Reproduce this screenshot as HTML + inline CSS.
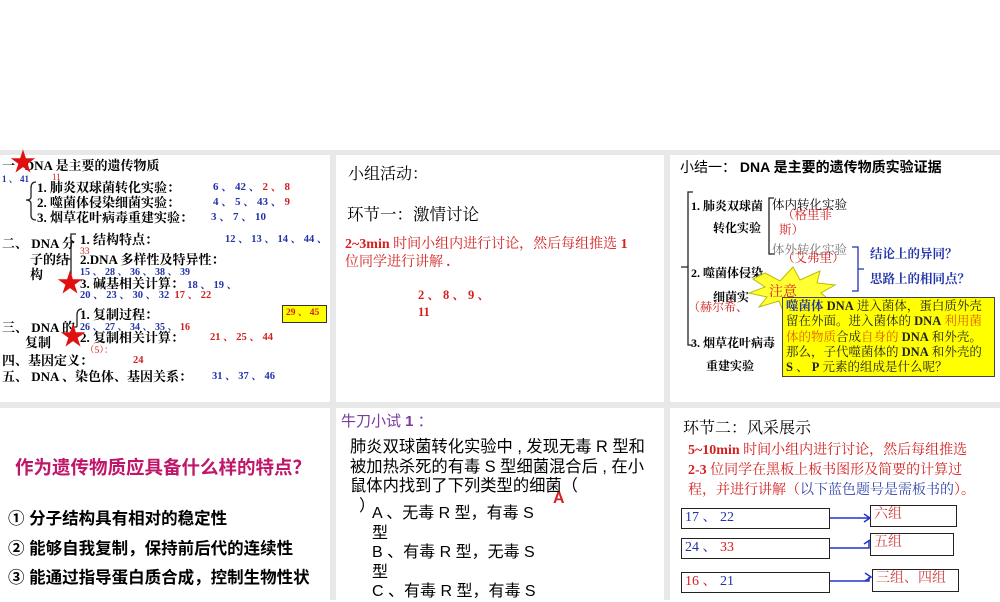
<!DOCTYPE html>
<html><head><meta charset="utf-8"><style>
body{margin:0;width:1000px;height:600px;background:#fff;position:relative;overflow:hidden;font-family:"Liberation Serif","Noto Serif CJK SC",serif;}
.g{position:absolute;background:#e8e8e8}
.p{position:absolute;background:#fff}
.t{position:absolute;white-space:nowrap;line-height:1}
.b{font-weight:bold}
.s{font-family:"Liberation Sans","Noto Sans CJK SC",sans-serif}
.bl{color:#2233aa}.rd{color:#d42020}
.star{position:absolute;color:#e01010;font-size:26px;line-height:1}
.box{position:absolute;border:1.5px solid #222;background:#fff;font-size:14px;line-height:18px;padding-left:3px}
</style></head><body>
<div class="g" style="left:0;top:150px;width:1000px;height:450px"></div>
<div class="p" style="left:0;top:155px;width:330px;height:247px"></div>
<div class="p" style="left:336px;top:155px;width:328px;height:247px"></div>
<div class="p" style="left:670px;top:155px;width:330px;height:247px"></div>
<div class="p" style="left:0;top:408px;width:330px;height:192px"></div>
<div class="p" style="left:336px;top:408px;width:328px;height:192px"></div>
<div class="p" style="left:670px;top:408px;width:330px;height:192px"></div>

<!-- left top -->
<div style="font-size:13px">
<div class="t b" style="left:2px;top:159px">一 &nbsp;&nbsp;DNA 是主要的遗传物质</div>
<div class="t b bl" style="left:2px;top:175px;font-size:9px">1 、 41</div>
<div class="t rd" style="left:52px;top:173px;font-size:9px">11</div>
<div class="t b" style="left:37px;top:181px">1. 肺炎双球菌转化实验：</div>
<div class="t b" style="left:37px;top:196px">2. 噬菌体侵染细菌实验：</div>
<div class="t b" style="left:37px;top:211px">3. 烟草花叶病毒重建实验：</div>
<div class="t b" style="left:213px;top:182px;font-size:11px"><span class="bl">6 、 42 、</span> <span class="rd">2 、 8</span></div>
<div class="t b" style="left:213px;top:197px;font-size:11px"><span class="bl">4 、 5 、 43 、</span> <span class="rd">9</span></div>
<div class="t b bl" style="left:211px;top:212px;font-size:11px">3 、 7 、 10</div>
<svg style="position:absolute;left:22px;top:180px" width="16" height="42"><path d="M14 2 Q9 2 9 8 L9 17 Q9 20 4 20 Q9 20 9 24 L9 35 Q9 40 14 40" fill="none" stroke="#222" stroke-width="1.3"/></svg>
<div class="t b" style="left:2px;top:237px">二、 DNA 分</div>
<div class="t b" style="left:30px;top:253px">子的结</div>
<div class="t b" style="left:30px;top:268px">构</div>
<svg style="position:absolute;left:62px;top:232px" width="16" height="55"><path d="M14 2 L9 2 L9 52 M2 27 L9 27" fill="none" stroke="#222" stroke-width="1.3"/></svg>
<div class="t b" style="left:80px;top:233px">1. 结构特点：</div>
<div class="t b bl" style="left:225px;top:235px;font-size:10.5px">12 、 13 、 14 、 44 、</div>
<div class="t rd" style="left:80px;top:248px;font-size:9.5px">33</div>
<div class="t b" style="left:80px;top:253px">2.DNA 多样性及特异性：</div>
<div class="t b bl" style="left:80px;top:268px;font-size:10px">15 、 28 、 36 、 38 、 39</div>
<div class="t b" style="left:80px;top:277px">3. 碱基相关计算： <span class="bl" style="font-size:10.5px">18 、 19 、</span></div>
<div class="t b" style="left:80px;top:291px;font-size:10.5px"><span class="bl">20 、 23 、 30 、 32</span> &nbsp;<span class="rd">17 、 22</span></div>
<div style="position:absolute;left:282px;top:305px;width:43px;height:16px;background:#ffff00;border:1px solid #333"></div>
<div class="t b rd" style="left:286px;top:309px;font-size:9.5px">29 、 45</div>
<svg style="position:absolute;left:72px;top:307px" width="12" height="40"><path d="M10 2 Q5 2 5 8 L5 20 M2 20 L5 20" fill="none" stroke="#222" stroke-width="1.3"/></svg>
<div class="t b" style="left:80px;top:308px">1. 复制过程：</div>
<div class="t b" style="left:2px;top:321px">三、 DNA 的</div>
<div class="t b" style="left:80px;top:323px;font-size:10px"><span class="bl">26 、 27 、 34 、 35 、</span> <span class="rd">16</span></div>
<div class="t b" style="left:25px;top:336px">复制</div>
<div class="t b" style="left:80px;top:331px">2. 复制相关计算：</div>
<div class="t b rd" style="left:210px;top:333px;font-size:10.5px">21 、 25 、 44</div>
<div class="t rd" style="left:85px;top:347px;font-size:9.5px">（5）：</div>
<div class="t b" style="left:2px;top:354px">四、基因定义：</div>
<div class="t b rd" style="left:133px;top:356px;font-size:10.5px">24</div>
<div class="t b" style="left:2px;top:370px">五、 DNA 、染色体、基因关系：</div>
<div class="t b bl" style="left:212px;top:372px;font-size:10.5px">31 、 37 、 46</div>
</div>
<div class="star" style="left:10px;top:150px">★</div>
<div class="star" style="left:57px;top:271px">★</div>
<div class="star" style="left:60px;top:324px">★</div>

<!-- middle top -->
<div class="t" style="left:348px;top:167px;font-size:16px">小组活动：</div>
<div class="t" style="left:347px;top:207px;font-size:16.5px">环节一：激情讨论</div>
<div class="t rd" style="left:345px;top:238px;font-size:14px"><b>2~3min</b> 时间小组内进行讨论，然后每组推选 <b>1</b></div>
<div class="t rd" style="left:345px;top:256px;font-size:14px">位同学进行讲解 <b>.</b></div>
<div class="t b rd" style="left:418px;top:289px;font-size:12.5px">2 、 8 、 9 、</div>
<div class="t b rd" style="left:418px;top:306px;font-size:12.5px">11</div>

<!-- right top -->
<div class="t s" style="left:680px;top:160px;font-size:14px">小结一： <b>DNA 是主要的遗传物质实验证据</b></div>
<svg style="position:absolute;left:675px;top:190px" width="20" height="160"><path d="M18 2 L13 2 L13 155 L18 155 M6 77 L13 77" fill="none" stroke="#222" stroke-width="1.3"/></svg>
<div class="t b" style="left:691px;top:200px;font-size:12px">1. 肺炎双球菌</div>
<div class="t b" style="left:713px;top:222px;font-size:12px">转化实验</div>
<svg style="position:absolute;left:764px;top:196px" width="12" height="62"><path d="M10 2 L5 2 L5 58 L10 58" fill="none" stroke="#222" stroke-width="1.3"/></svg>
<div class="t" style="left:772px;top:199px;font-size:12.5px">体内转化实验</div>
<div class="t rd" style="left:782px;top:209px;font-size:12.5px">（格里菲</div>
<div class="t rd" style="left:779px;top:224px;font-size:12.5px">斯）</div>
<div class="t" style="left:772px;top:244px;font-size:12.5px;color:#777">体外转化实验</div>
<div class="t rd" style="left:782px;top:252px;font-size:12.5px">（艾弗里）</div>
<svg style="position:absolute;left:850px;top:245px" width="15" height="50"><path d="M2 2 L8 2 L8 46 L2 46 M8 24 L14 24" fill="none" stroke="#2233aa" stroke-width="1.3"/></svg>
<div class="t b bl" style="left:870px;top:248px;font-size:12.5px">结论上的异同？</div>
<div class="t b bl" style="left:870px;top:273px;font-size:12.5px">思路上的相同点？</div>
<div class="t b" style="left:691px;top:267px;font-size:12px">2. 噬菌体侵染</div>
<div class="t b" style="left:713px;top:291px;font-size:12px">细菌实</div>
<div class="t rd" style="left:688px;top:301px;font-size:12px">（赫尔希、</div>
<div class="t b" style="left:691px;top:337px;font-size:12px">3. 烟草花叶病毒</div>
<div class="t b" style="left:706px;top:360px;font-size:12px">重建实验</div>
<svg style="position:absolute;left:745px;top:265px" width="95" height="50"><polygon points="20,8 35,16 48,2 55,15 75,6 72,18 90,20 76,28 88,38 68,36 62,48 50,38 38,46 34,36 14,42 22,32 4,28 20,22 8,14" fill="#ffff33" stroke="#bbbb00"/></svg>
<div class="t rd" style="left:769px;top:286px;font-size:14px">注意</div>
<div style="position:absolute;left:782px;top:297px;width:211px;height:78px;background:#ffff00;border:1.5px solid #444"></div>
<div style="position:absolute;left:786px;top:299px;width:200px;font-size:12.5px;line-height:15.3px;color:#222"><b style="color:#2233aa">噬菌体</b> <b>DNA</b> 进入菌体，蛋白质外壳留在外面。进入菌体的 <b>DNA</b> <span style="color:#e06000">利用菌体的物质</span>合成<span style="color:#e06000">自身的</span> <b>DNA</b> 和外壳。那么，子代噬菌体的 <b>DNA</b> 和外壳的 <b>S</b> 、 <b>P</b> 元素的组成是什么呢？</div>

<!-- bottom left -->
<div class="t s b" style="left:15px;top:459px;font-size:18.5px;color:#c0166a">作为遗传物质应具备什么样的特点？</div>
<div class="t s b" style="left:8px;top:511px;font-size:16.5px">① 分子结构具有相对的稳定性</div>
<div class="t s b" style="left:8px;top:541px;font-size:16.5px">② 能够自我复制，保持前后代的连续性</div>
<div class="t s b" style="left:8px;top:570px;font-size:16.5px">③ 能通过指导蛋白质合成，控制生物性状</div>

<!-- bottom middle -->
<div class="t s" style="left:341px;top:414px;font-size:15px;color:#7a3aa0">牛刀小试 <b>1</b> ：</div>
<div class="t s" style="left:350px;top:438px;font-size:16.3px;line-height:19.5px">肺炎双球菌转化实验中 , 发现无毒 R 型和<br>被加热杀死的有毒 S 型细菌混合后 , 在小<br>鼠体内找到了下列类型的细菌（<br>&nbsp;&nbsp;）</div>
<div class="t s b rd" style="left:553px;top:491px;font-size:16px">A</div>
<div class="t s" style="left:372px;top:504px;font-size:16px;line-height:19.5px">A 、无毒 R 型，有毒 S<br>型<br>B 、有毒 R 型，无毒 S<br>型<br>C 、有毒 R 型，有毒 S</div>

<!-- bottom right -->
<div class="t" style="left:683px;top:421px;font-size:16px">环节二：风采展示</div>
<div class="t rd" style="left:688px;top:441px;font-size:14px;line-height:20px"><b>5~10min</b> 时间小组内进行讨论，然后每组推选<br><b>2-3</b> 位同学在黑板上板书图形及简要的计算过<br>程，并进行讲解（<span style="color:#3344aa">以下蓝色题号是需板书的</span>）。</div>
<div class="box" style="left:681px;top:508px;width:144px;height:19px"><span class="bl">17 、 22</span></div>
<div class="box" style="left:681px;top:538px;width:144px;height:19px"><span class="bl">24 、</span> <span class="rd">33</span></div>
<div class="box" style="left:681px;top:572px;width:144px;height:19px"><span class="rd">16 、</span> <span class="bl">21</span></div>
<div class="box rd" style="left:870px;top:505px;width:82px;height:20px;color:#d04040">六组</div>
<div class="box rd" style="left:870px;top:533px;width:79px;height:21px;color:#d04040">五组</div>
<div class="box rd" style="left:872px;top:569px;width:82px;height:21px;color:#d04040">三组、四组</div>
<svg style="position:absolute;left:829px;top:505px" width="45" height="90"><g fill="none" stroke="#2233cc" stroke-width="1.5"><path d="M1 13 L40 13 M35 9 L41 13 L35 17"/><path d="M1 43 L40 43 L40 35 M35 39 L41 35"/><path d="M1 76 L40 76 L40 72 M36 68 L42 72 L36 76"/></g></svg>
</body></html>
